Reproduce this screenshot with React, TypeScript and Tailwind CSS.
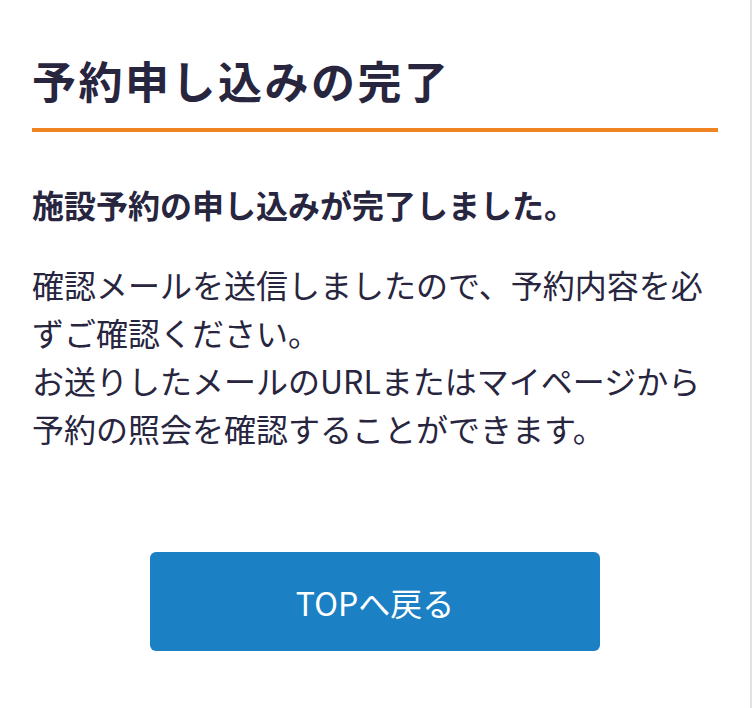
const bodyFont = {
  fontFamily: '"Noto Sans CJK JP", "Noto Sans", sans-serif',
};

const ReservationComplete: React.FC = () => {
  const onBack = () => {
    // back to top
  };

  return (
    <div
      style={bodyFont}
      className="w-[752px] min-h-[708px] bg-white border-r-2 border-[#e2e2e2] text-[#28253f]"
    >
      <div className="pt-[49px] pl-[32px] pr-[32px]">
        {/* Page title */}
        <h1 className="text-[44px] leading-[63px] font-bold tracking-[2.5px] pb-[16px] border-b-4 border-[#ef8422]">
          予約申し込みの完了
        </h1>

        {/* Message */}
        <h2 className="mt-[48px] text-[32px] leading-[48px] font-bold">
          施設予約の申し込みが完了しました。
        </h2>
        <p className="mt-[32px] text-[32px] leading-[48px]">
          確認メールを送信しましたので、予約内容を必ずご確認ください。
          <br />
          お送りしたメールのURLまたはマイページから
          <br />
          予約の照会を確認することができます。
        </p>

        <div className="mt-[100px] flex justify-center">
          <button
            type="button"
            onClick={onBack}
            className="w-[450px] h-[99px] rounded-[6px] bg-[#1c80c4] text-white text-[32px] leading-none"
          >
            TOPへ戻る
          </button>
        </div>
      </div>
    </div>
  );
};

export default function App() {
  return <ReservationComplete />;
}
